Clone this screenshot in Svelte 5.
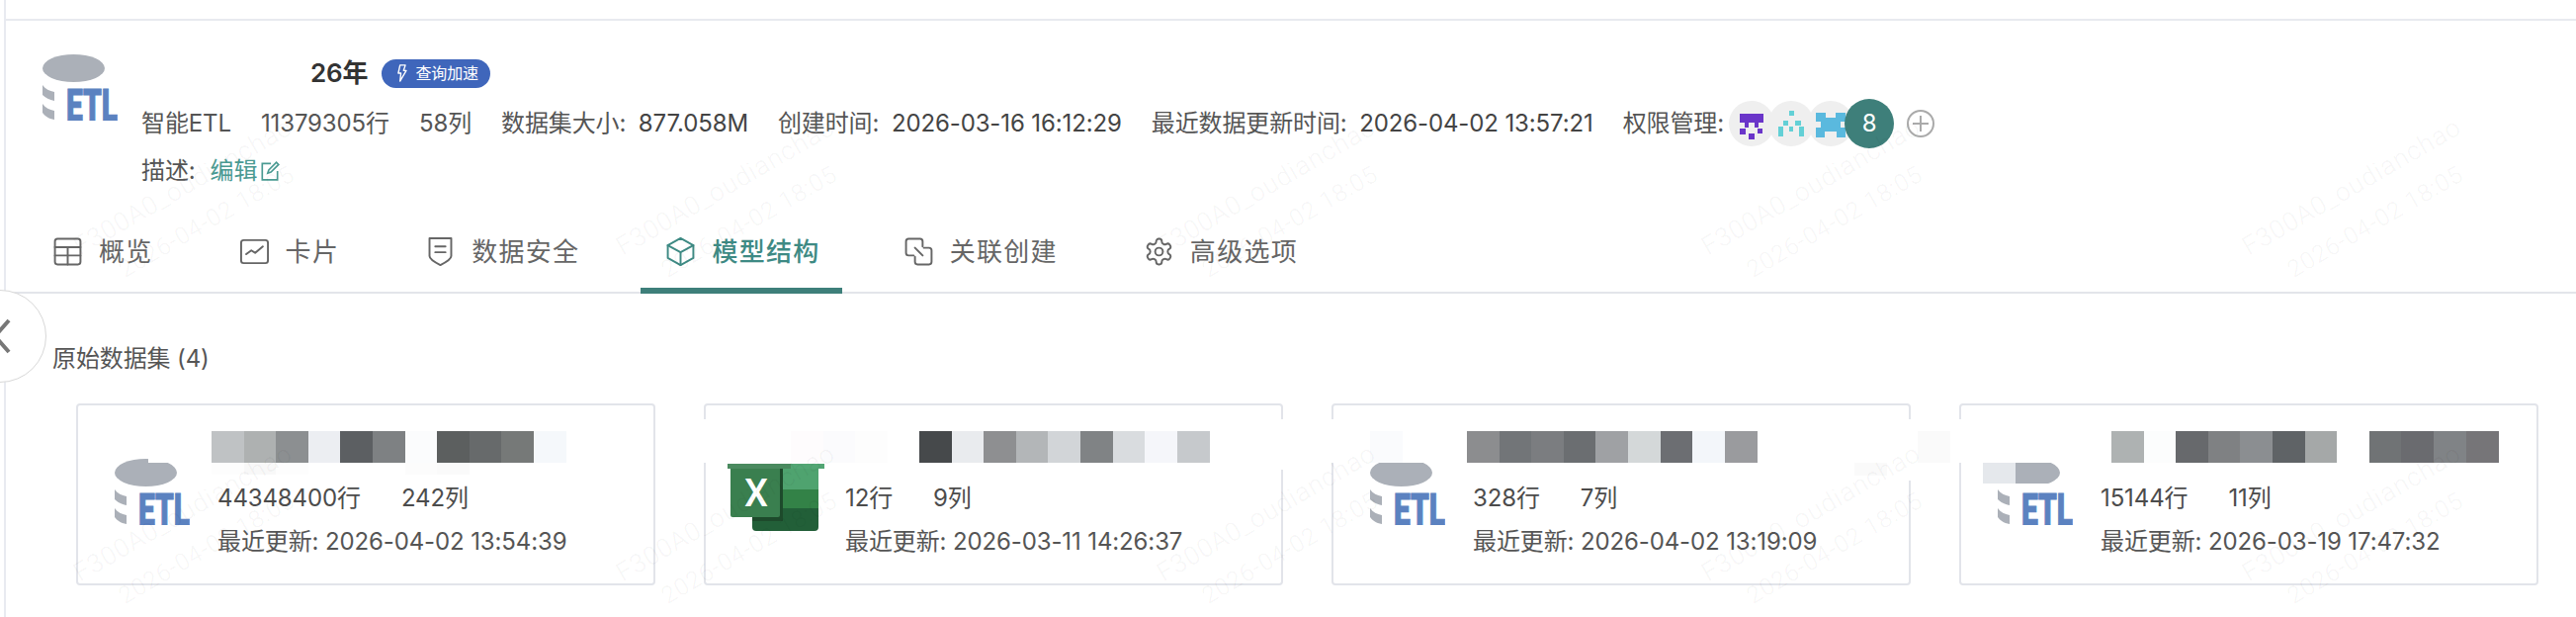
<script lang="ts">
	const tabs = [
		{ key: 'table', label: '概览' },
		{ key: 'chart', label: '卡片' },
		{ key: 'shield', label: '数据安全' },
		{ key: 'cube', label: '模型结构', active: true },
		{ key: 'link', label: '关联创建' },
		{ key: 'gear', label: '高级选项' }
	];

	const cards = [
		{ icon: 'etl', rows: '44348400行', cols: '242列', updated: '2026-04-02 13:54:39' },
		{ icon: 'excel', rows: '12行', cols: '9列', updated: '2026-03-11 14:26:37' },
		{ icon: 'etl', rows: '328行', cols: '7列', updated: '2026-04-02 13:19:09' },
		{ icon: 'etl', rows: '15144行', cols: '11列', updated: '2026-03-19 17:47:32' }
	];

	// redacted dataset names: runs of blurred blocks, drawn over the cards
	const strips = [
		{ x: 704, y: 424, w: 1856, h: 44, c: '#fff' },
		{ x: 1925, y: 468, w: 56, h: 18, c: '#fff' },
		{ x: 1290, y: 468, w: 16, h: 7, c: '#fff' },
		{ x: 150, y: 436, w: 32, h: 32, c: '#fff' },
		{ x: 2006, y: 489, w: 66, h: 4, c: '#fff' }
	];
	const runs = [
		{ x: 214, y: 436, h: 32, colors: ['#bfc2c4', '#aeb1b1', '#8c8f91', '#eceef2', '#5c5f62', '#7e8183', '#fbfcfd', '#5c5f5f', '#676a6b', '#767978', '#f5f8fb'] },
		{ x: 214, y: 468, h: 12, colors: ['#fdfdfd', '#f8f8f8', '#fdfdfd', '#fff', '#fff', '#fff', '#fcfcfc', '#fafafa'] },
		{ x: 800, y: 436, h: 32, colors: ['#fefcfd', '#fbfbfd', '#fdfdfd', '#fff'] },
		{ x: 930, y: 436, h: 32, colors: ['#46494b', '#e9ebee', '#8e8f91', '#b3b6b8', '#d2d5d8', '#808385', '#d9dcdf', '#f5f6fa', '#c6c9cc'] },
		{ x: 1386, y: 436, h: 32, colors: ['#fafbfd'] },
		{ x: 1484, y: 436, h: 32, colors: ['#8c8d8f', '#727578', '#7b7d80', '#6b6e71', '#9fa1a4', '#d4d8d9', '#6c6e72', '#f3f6fa', '#9a9b9e'] },
		{ x: 1876, y: 468, h: 13, colors: ['#fafafa'] },
		{ x: 1940, y: 436, h: 32, colors: ['#fafafa'] },
		{ x: 2006, y: 468, h: 21, colors: ['#e5e8ec', '#abb0b8'] },
		{ x: 2136, y: 436, h: 32, colors: ['#aeb2b2', '#fcfdfd', '#67696c', '#7f8183', '#8b8e91', '#5f6366', '#a5a8a8', '#fff', '#707375', '#6a6b6f', '#808386', '#767578'] }
	];

	const marks: { x: number; y: number }[] = [];
	for (const y of [260, 590]) {
		for (const x of [84, 633, 1180, 1731, 2278]) marks.push({ x, y });
	}
</script>

{#snippet etlIcon()}
	<svg class="etl" viewBox="0 0 76 67" aria-hidden="true">
		<ellipse cx="31.5" cy="14" rx="31.5" ry="14" fill="#abb0b8" />
		<path d="M0 31c3 4 7 6 12 7v9C7 46 3 44 0 41z" fill="#abb0b8" />
		<path d="M0 50c3 4 7 6 12 7v9C6 65 2 62 0 59z" fill="#abb0b8" />
		<text x="24" y="67" font-size="45" font-weight="900" textLength="52" lengthAdjust="spacingAndGlyphs" fill="#5b82c0" stroke="#5b82c0" stroke-width="1" font-family="Roboto, sans-serif">ETL</text>
	</svg>
{/snippet}

{#snippet excelIcon()}
	<svg class="excel" viewBox="0 0 98 68" aria-hidden="true">
		<rect x="0" y="0" width="98" height="5" fill="#4a8a5f" />
		<rect x="64" y="0" width="34" height="5" fill="#53a674" />
		<path d="M25 5h67v21H25z" fill="#4fa36f" />
		<path d="M25 26h67v19H25z" fill="#338247" />
		<path d="M25 45h67v19a4 4 0 0 1-4 4H29a4 4 0 0 1-4-4z" fill="#225f38" />
		<path d="M25 5h31v53H25z" fill="#1d4a2b" />
		<path d="M3 5h50v47a2 2 0 0 1-2 2H5a2 2 0 0 1-2-2z" fill="#3a7f4f" />
		<text x="29" y="43" text-anchor="middle" font-size="38" font-weight="500" fill="#fff" font-family="Roboto, sans-serif">X</text>
	</svg>
{/snippet}

{#snippet tabIcon(key: string)}
	<svg class="tab-icon" viewBox="0 0 24 24" aria-hidden="true">
		{#if key === 'table'}
			<rect x="2" y="2" width="20" height="20" rx="2" />
			<path d="M2 8.500h20M2 15h20M12 8.500V22" />
		{:else if key === 'chart'}
			<rect x="1.500" y="3" width="21" height="18" rx="2" />
			<path d="M5.500 14l4-3 3 2 6-5" />
		{:else if key === 'shield'}
			<path d="M3.500 1.500h17v14c0 2.500-4.500 5-8.500 7-4-2-8.500-4.500-8.500-7z" />
			<path d="M8 8h8M8 12.500h8" />
		{:else if key === 'cube'}
			<path d="M12 1.500l10 5.500v10l-10 5.500-10-5.500V7z" />
			<path d="M2 7l10 5.500L22 7M12 12.500v10" />
		{:else if key === 'link'}
			<path d="M8 15H4a2 2 0 0 1-2-2V4a2 2 0 0 1 2-2h9a2 2 0 0 1 2 2v4" />
			<path d="M16 9h4a2 2 0 0 1 2 2v9a2 2 0 0 1-2 2h-9a2 2 0 0 1-2-2v-4" />
			<path d="M9 9l6 6" />
		{:else}
			<path d="M12.220 2h-.44a2 2 0 0 0-2 2v.18a2 2 0 0 1-1 1.730l-.43.25a2 2 0 0 1-2 0l-.15-.08a2 2 0 0 0-2.730.73l-.22.38a2 2 0 0 0 .73 2.730l.15.1a2 2 0 0 1 1 1.720v.51a2 2 0 0 1-1 1.740l-.15.09a2 2 0 0 0-.73 2.730l.22.38a2 2 0 0 0 2.730.73l.15-.08a2 2 0 0 1 2 0l.43.25a2 2 0 0 1 1 1.730V20a2 2 0 0 0 2 2h.44a2 2 0 0 0 2-2v-.18a2 2 0 0 1 1-1.730l.43-.25a2 2 0 0 1 2 0l.15.08a2 2 0 0 0 2.730-.73l.22-.39a2 2 0 0 0-.73-2.730l-.15-.08a2 2 0 0 1-1-1.740v-.5a2 2 0 0 1 1-1.740l.15-.09a2 2 0 0 0 .73-2.730l-.22-.38a2 2 0 0 0-2.730-.73l-.15.08a2 2 0 0 1-2 0l-.43-.25a2 2 0 0 1-1-1.730V4a2 2 0 0 0-2-2z" />
			<circle cx="12" cy="12" r="3" />
		{/if}
	</svg>
{/snippet}

<div class="page">
	<div class="topbar"></div>

	<header class="head">
		<div class="head-icon">{@render etlIcon()}</div>
		<div class="head-body">
			<div class="title-row">
				<span class="title-mask"></span>
				<h1 class="title">26年</h1>
				<span class="badge">
					<svg viewBox="0 0 12 20" width="11" height="18" aria-hidden="true">
						<path d="M4 1h6L8 7h3L4 19l1-9H2z" fill="none" stroke="#fff" stroke-width="1.500" stroke-linejoin="round" />
					</svg>
					查询加速
				</span>
			</div>
			<div class="meta">
				<span>智能ETL</span>
				<span>11379305行</span>
				<span>58列</span>
				<span>数据集大小: <b>877.058M</b></span>
				<span>创建时间: <b>2026-03-16 16:12:29</b></span>
				<span>最近数据更新时间: <b>2026-04-02 13:57:21</b></span>
				<span class="perm">
					权限管理:
					<span class="avatars">
						<span class="avatar">
							<svg viewBox="0 0 46 46" aria-hidden="true" fill="#6a35c9">
								<path d="M11 13h24v9h-5v5h-4v-5h-6v5h-4v-5h-5z" />
								<rect x="11" y="28" width="6" height="6" /><rect x="29" y="28" width="5" height="5" /><rect x="20" y="33" width="6" height="6" />
							</svg>
						</span>
						<span class="avatar">
							<svg viewBox="0 0 46 46" aria-hidden="true" fill="#63d0d6">
								<rect x="21" y="10" width="5" height="5" /><rect x="15" y="20" width="5" height="5" /><rect x="27" y="20" width="6" height="5" />
								<rect x="10" y="26" width="5" height="10" /><rect x="31" y="26" width="5" height="10" /><rect x="21" y="26" width="4" height="5" />
							</svg>
						</span>
						<span class="avatar">
							<svg viewBox="0 0 46 46" aria-hidden="true" fill="#5ab9de">
								<path d="M8 12h10v5h10v-5h10v9h-5v6h5v10h-9v-6h-12v6H8V27h5v-6H8z" />
							</svg>
						</span>
						<span class="avatar more">8</span>
					</span>
					<svg class="plus" viewBox="0 0 28 28" aria-hidden="true">
						<circle cx="14" cy="14" r="13" />
						<path d="M14 6v16M6 14h16" />
					</svg>
				</span>
			</div>
			<div class="desc">
				<span>描述:</span>
				<span class="edit">
					<span>编辑</span>
					<svg viewBox="0 0 20 20" width="22" height="22" aria-hidden="true">
						<path d="M11 3H3v15h14v-8" />
						<path d="M8 12l1-3 7-7 2 2-7 7z" />
					</svg>
				</span>
			</div>
		</div>
	</header>

	<nav class="tabs">
		{#each tabs as tab}
			<div class="tab" class:active={tab.active}>
				{@render tabIcon(tab.key)}
				<span>{tab.label}</span>
			</div>
		{/each}
	</nav>

	<section class="source">
		<h2 class="source-title">原始数据集 (4)</h2>
		<div class="cards">
			{#each cards as card}
				<article class="card">
					<div class="card-icon" class:is-excel={card.icon === 'excel'}>
						{#if card.icon === 'excel'}
							{@render excelIcon()}
						{:else}
							{@render etlIcon()}
						{/if}
					</div>
					<div class="card-info">
						<div class="stats">
							<span>{card.rows}</span>
							<span>{card.cols}</span>
						</div>
						<div class="updated">最近更新: {card.updated}</div>
					</div>
				</article>
			{/each}
		</div>
	</section>

	<div class="collapse">
		<svg viewBox="0 0 20 40" width="20" height="40" aria-hidden="true">
			<path d="M14 4L0 20l14 16" />
		</svg>
	</div>

	<!-- redaction blocks -->
	{#each strips as s}
		<div class="cell" style="left: {s.x}px; top: {s.y}px; width: {s.w}px; height: {s.h}px; background: {s.c};"></div>
	{/each}
	{#each runs as run}
		{#each run.colors as color, i}
			<div class="cell" style="left: {run.x + i * 32.6}px; top: {run.y}px; width: 33px; height: {run.h}px; background: {color};"></div>
		{/each}
	{/each}

	<!-- watermark -->
	{#each marks as m}
		<div class="mark" style="left: {m.x}px; top: {m.y - 26}px;">
			<div>F300A0_oudianchao</div>
			<div class="mark-date">2026-04-02 18:05</div>
		</div>
	{/each}
</div>

<style>
	:global(body) {
		margin: 0;
		background: #fff;
	}

	.page {
		position: relative;
		width: 2606px;
		height: 624px;
		overflow: hidden;
		background: #fff;
		font-family: Inter, 'Noto Sans CJK SC', sans-serif;
		font-size: 24px;
		line-height: 30px;
		letter-spacing: -0.12px;
		color: #555;
		padding-left: 4px;
		box-sizing: border-box;
	}

	.page::before {
		content: '';
		position: absolute;
		left: 4px;
		top: 0;
		bottom: 0;
		width: 2px;
		background: #e8eaf0;
	}

	.topbar {
		height: 19px;
		border-bottom: 2px solid #e8eaef;
	}

	.head {
		display: flex;
		gap: 24px;
		padding: 34px 0 0 39px;
	}

	.head-icon {
		width: 76px;
		flex: none;
	}

	.etl {
		display: block;
		width: 76px;
		height: 67px;
	}

	.title-row {
		display: flex;
		align-items: center;
		height: 40px;
		margin-top: -1px;
	}

	.title-mask {
		width: 172px;
		height: 32px;
		background: #fff;
		position: relative;
		z-index: 1;
	}

	.title {
		margin: 0 14px 0 -1px;
		font-size: 26px;
		font-weight: 600;
		color: #333;
	}

	.badge {
		display: flex;
		align-items: center;
		gap: 8px;
		height: 29px;
		padding: 0 12px 0 15px;
		border-radius: 15px;
		background: #3f66bb;
		color: #fff;
		font-size: 16px;
	}

	.meta {
		display: flex;
		align-items: center;
		gap: 30px;
		height: 50px;
		margin-top: 6px;
		white-space: nowrap;
	}

	.meta b {
		font-weight: 400;
		color: #444;
		margin-left: 6px;
	}

	.perm {
		display: flex;
		align-items: center;
	}

	.avatars {
		display: flex;
		align-items: center;
		margin-left: 5px;
	}

	.avatar {
		width: 46px;
		height: 46px;
		border-radius: 50%;
		background: #efefef;
		margin-right: -6px;
		overflow: hidden;
		flex: none;
	}

	.avatar svg {
		display: block;
	}

	.avatar.more {
		width: 50px;
		height: 50px;
		background: #3e7f7a;
		color: #fff;
		font-size: 24px;
		line-height: 50px;
		text-align: center;
		position: relative;
		margin-left: -3px;
		margin-right: 0;
	}

	.plus {
		width: 28px;
		height: 28px;
		margin-left: 13px;
		fill: none;
		stroke: #aaa;
		stroke-width: 2;
	}

	.desc {
		display: flex;
		align-items: center;
		height: 30px;
		margin-top: 8px;
		white-space: nowrap;
	}

	.edit {
		display: flex;
		align-items: center;
		gap: 2px;
		margin-left: 15px;
		color: #4a9a92;
	}

	.edit svg {
		fill: none;
		stroke: #4a9a92;
		stroke-width: 1.500;
	}

	.tabs {
		display: flex;
		gap: 45px;
		margin-top: 32px;
		padding-left: 29px;
		border-bottom: 2px solid #e3e5ea;
		box-sizing: border-box;
		height: 77px;
	}

	.tab {
		display: flex;
		align-items: center;
		gap: 16px;
		padding: 0 22px 8px;
		margin-bottom: -2px;
		font-size: 26px;
		letter-spacing: 1.300px;
		color: #666;
	}

	.tab.active {
		color: #3e8a84;
		font-weight: 500;
		margin: 0 -3px -2px -5px;
		padding: 0 22px 2px 27px;
		border-bottom: 6px solid #3e7f7a;
	}

	.tab-icon {
		width: 31px;
		height: 31px;
		margin-left: -2px;
		fill: none;
		stroke: currentColor;
		stroke-width: 1.500;
		stroke-linejoin: round;
		stroke-linecap: round;
	}

	.source {
		padding-left: 49px;
	}

	.source-title {
		margin: 51px 0 30px;
		font-size: 24px;
		font-weight: 400;
		line-height: 30px;
		color: #555;
	}

	.cards {
		display: flex;
		gap: 49px;
		margin-left: 24px;
	}

	.card {
		display: flex;
		width: 586px;
		height: 184px;
		box-sizing: border-box;
		border: 2px solid #e2e4ea;
		border-radius: 4px;
		padding-top: 54px;
	}

	.card-icon {
		flex: none;
		width: 141px;
		padding-left: 37px;
		box-sizing: border-box;
	}

	.card-icon.is-excel {
		padding-left: 22px;
		padding-top: 5px;
	}

	.excel {
		display: block;
		width: 98px;
		height: 68px;
	}

	.card-info {
		padding-top: 25px;
		color: #555;
	}

	.stats {
		display: flex;
		gap: 41px;
		color: #4c4c4c;
	}

	.updated {
		margin-top: 14px;
	}

	.collapse {
		position: absolute;
		left: -47px;
		top: 293px;
		width: 94px;
		height: 94px;
		border: 1px solid #d8d8d8;
		border-radius: 50%;
		background: #fff;
		box-sizing: border-box;
		display: flex;
		align-items: center;
		justify-content: flex-end;
		padding-right: 31px;
	}

	.collapse svg {
		fill: none;
		stroke: #777;
		stroke-width: 4;
	}

	.cell {
		position: absolute;
	}

	.mark {
		position: absolute;
		transform-origin: 0 30px;
		transform: rotate(-30deg);
		font-family: Roboto, sans-serif;
		font-size: 26px;
		font-weight: 300;
		line-height: 30px;
		letter-spacing: 1px;
		color: rgba(0, 0, 0, 0.055);
		white-space: nowrap;
		pointer-events: none;
	}

	.mark-date {
		margin: 13px 0 0 28px;
		font-size: 24px;
	}
</style>
